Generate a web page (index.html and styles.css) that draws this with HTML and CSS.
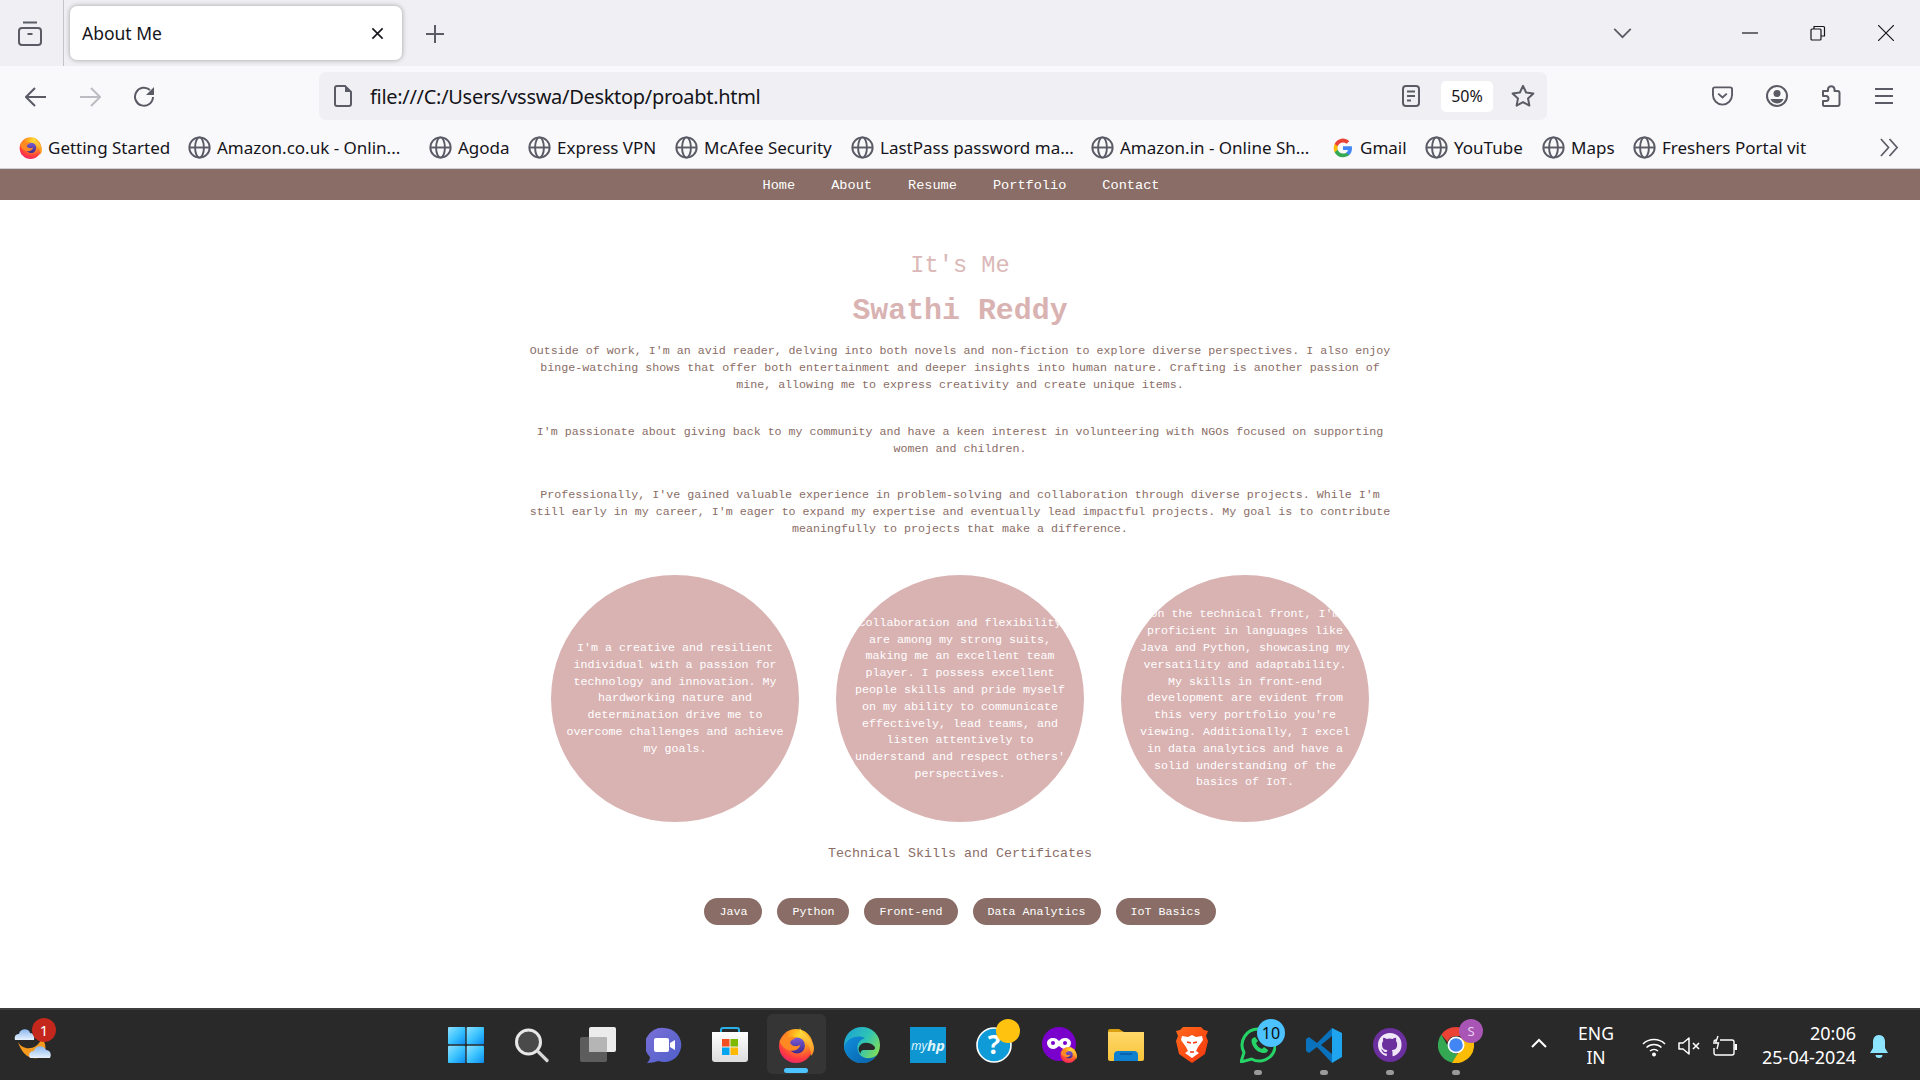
FILE: index.html
```html
<!DOCTYPE html>
<html lang="en">
<head>
<meta charset="utf-8">
<title>About Me</title>
<link rel="stylesheet" href="styles.css">
</head>
<body>
<svg class="defs" width="0" height="0" aria-hidden="true">
  <defs>
    <radialGradient id="ffBody" cx="0.62" cy="0.2" r="0.95">
      <stop offset="0" stop-color="#ffe226"/><stop offset="0.35" stop-color="#ff9a1f"/><stop offset="0.7" stop-color="#ff3d3d"/><stop offset="1" stop-color="#e31587"/>
    </radialGradient>
    <linearGradient id="ffFlame" x1="0" y1="0" x2="0" y2="1">
      <stop offset="0" stop-color="#ffe84d"/><stop offset="1" stop-color="#ff8a1f"/>
    </linearGradient>
    <linearGradient id="ffCore" x1="0" y1="0" x2="0" y2="1">
      <stop offset="0" stop-color="#7b5bd6"/><stop offset="1" stop-color="#3d2a8c"/>
    </linearGradient>
    <linearGradient id="winG" x1="0" y1="0" x2="1" y2="1">
      <stop offset="0" stop-color="#8fe0ff"/><stop offset="0.5" stop-color="#3cc4ff"/><stop offset="1" stop-color="#0a8cf0"/>
    </linearGradient>
    <linearGradient id="meetG" x1="0" y1="0" x2="1" y2="1">
      <stop offset="0" stop-color="#7b6fd8"/><stop offset="1" stop-color="#4f5fc9"/>
    </linearGradient>
    <linearGradient id="edgeG" x1="0" y1="0" x2="1" y2="0.6">
      <stop offset="0" stop-color="#1a9fd8"/><stop offset="0.6" stop-color="#2fc4b4"/><stop offset="1" stop-color="#7ddc5c"/>
    </linearGradient>
    <linearGradient id="edgeB" x1="0" y1="0" x2="1" y2="1">
      <stop offset="0" stop-color="#0f8fdc"/><stop offset="1" stop-color="#0a5fa8"/>
    </linearGradient>
    <linearGradient id="folderG" x1="0" y1="0" x2="0" y2="1">
      <stop offset="0" stop-color="#ffd869"/><stop offset="1" stop-color="#f8c33a"/>
    </linearGradient>
    <linearGradient id="braveG" x1="0" y1="0" x2="1" y2="1">
      <stop offset="0" stop-color="#ff6a1a"/><stop offset="1" stop-color="#f5360f"/>
    </linearGradient>
    <linearGradient id="bagG" x1="0" y1="0" x2="0" y2="1">
      <stop offset="0" stop-color="#ffffff"/><stop offset="1" stop-color="#dcdcdc"/>
    </linearGradient>
    <linearGradient id="cloudG" x1="0" y1="0" x2="0" y2="1">
      <stop offset="0" stop-color="#8cb8ee"/><stop offset="1" stop-color="#e8f2ff"/>
    </linearGradient>
    <symbol id="globe" viewBox="0 0 24 24">
      <g fill="none" stroke="#5b5b66" stroke-width="2">
        <circle cx="12" cy="12" r="10.6"/>
        <ellipse cx="12" cy="12" rx="4.6" ry="10.6"/>
        <path d="M1.5 12h21"/>
      </g>
    </symbol>
    <symbol id="firefox" viewBox="0 0 36 36">
      <circle cx="18" cy="19" r="17" fill="url(#ffBody)"/>
      <path d="M22 0c0 4 4 6 7 9 4 3 7 8 7 12 0 3-1 6-3 8 0-6-2-11-7-15-3-3-5-8-4-14z" fill="url(#ffFlame)"/>
      <circle cx="19" cy="18.500" r="8" fill="url(#ffCore)"/>
      <path d="M1.500 14c2-2 3-5 6-7 0 2 1 3.500 3 3.500 2-1 4-1 7 0-1 2-4 2-5 4-1 1 0 3 2 4 3 1 6 1 8-1-1 4-5 7-10 6-5-1-9-4-11-9.500z" fill="#ff8a24"/>
    </symbol>
    <symbol id="chev" viewBox="0 0 24 24">
      <path d="M5 15l7-7 7 7" fill="none" stroke="#fff" stroke-width="2"/>
    </symbol>
  </defs>
</svg>

<header class="tabbar">
  <svg class="ico-tabs" viewBox="0 0 24 25"><g fill="none" stroke="#5b5b66" stroke-width="2"><rect x="1" y="7" width="22" height="17" rx="3"/><path d="M5 1.500h14M9.500 13h5"/></g></svg>
  <span class="tab-sep"></span>
  <div class="tab">
    <span class="tab-title">About Me</span>
    <svg class="ico-x" viewBox="0 0 14 14"><path d="M1.500 1.500l11 11M12.500 1.500l-11 11" fill="none" stroke="#15141a" stroke-width="1.700"/></svg>
  </div>
  <svg class="ico-plus" viewBox="0 0 18 18"><path d="M9 0v18M0 9h18" fill="none" stroke="#5b5b66" stroke-width="2"/></svg>
  <span class="grow"></span>
  <svg class="ico-down" viewBox="0 0 20 12"><path d="M1 1l9 9 9-9" fill="none" stroke="#5b5b66" stroke-width="2"/></svg>
  <div class="winctl">
    <svg class="w-ico" viewBox="0 0 16 16"><path d="M0 8h16" stroke="#15141a" stroke-width="1.200"/></svg>
    <svg class="w-ico" viewBox="0 0 16 16"><g fill="none" stroke="#15141a" stroke-width="1.200"><rect x="1" y="4" width="10" height="11" rx="1"/><path d="M4 4V1.500h9.500a1 1 0 0 1 1 1V11H11"/></g></svg>
    <svg class="w-ico" viewBox="0 0 16 16"><path d="M0 0l16 16M16 0L0 16" fill="none" stroke="#15141a" stroke-width="1.200"/></svg>
  </div>
</header>

<div class="toolbar">
  <svg class="tb-ico" viewBox="0 0 22 22"><path d="M21 11H2M10 2l-9 9 9 9" fill="none" stroke="#5b5b66" stroke-width="2"/></svg>
  <svg class="tb-ico" viewBox="0 0 22 22"><path d="M1 11h19M12 2l9 9-9 9" fill="none" stroke="#bcbcc2" stroke-width="2"/></svg>
  <svg class="tb-ico" viewBox="0 0 22 22"><path d="M20 11a9 9 0 1 1-3-7" fill="none" stroke="#5b5b66" stroke-width="2"/><path d="M21 1v8h-8z" fill="#5b5b66"/></svg>
  <div class="urlbar">
    <svg class="ico-page" viewBox="0 0 18 22"><path d="M3 1h8l6 6v12a2 2 0 0 1-2 2H3a2 2 0 0 1-2-2V3a2 2 0 0 1 2-2z" fill="none" stroke="#5b5b66" stroke-width="2"/><path d="M11 1v6h6z" fill="#5b5b66"/></svg>
    <span class="url">file:///C:/Users/vsswa/Desktop/proabt.html</span>
    <span class="grow"></span>
    <svg class="ico-reader" viewBox="0 0 18 22"><rect x="1" y="1" width="16" height="20" rx="3" fill="none" stroke="#5b5b66" stroke-width="2"/><path d="M5 6.500h8M5 11h8M5 15.500h4" stroke="#5b5b66" stroke-width="2"/></svg>
    <span class="zoom-pill">50%</span>
    <svg class="ico-star" viewBox="0 0 24 24"><path d="M12 1.800l3.100 6.700 7.300.9-5.400 5 1.400 7.200L12 18.100l-6.400 3.500 1.400-7.200-5.400-5 7.300-.9z" fill="none" stroke="#5b5b66" stroke-width="2" stroke-linejoin="round"/></svg>
  </div>
  <div class="tools">
    <svg class="t-pocket" viewBox="0 0 22 20"><path d="M3 1h16a2 2 0 0 1 2 2v6a10 10 0 0 1-20 0V3a2 2 0 0 1 2-2z" fill="none" stroke="#5b5b66" stroke-width="2"/><path d="M6.500 7.500l4.500 4 4.500-4" fill="none" stroke="#5b5b66" stroke-width="2"/></svg>
    <svg class="t-acct" viewBox="0 0 22 22"><circle cx="11" cy="11" r="10" fill="none" stroke="#5b5b66" stroke-width="2"/><circle cx="11" cy="8.500" r="3.500" fill="#5b5b66"/><path d="M4.500 14h13a7 7 0 0 1-13 0z" fill="#5b5b66"/></svg>
    <svg class="t-ext" viewBox="0 0 20 23"><path d="M2 7h5V5a3.300 3.300 0 0 1 6.500 0v2h3a2 2 0 0 1 2 2v11a2 2 0 0 1-2 2H3a1 1 0 0 1-1-1v-4h3a2.500 2.500 0 0 0 0-5H2z" fill="none" stroke="#5b5b66" stroke-width="2" stroke-linejoin="round"/></svg>
    <svg class="t-menu" viewBox="0 0 18 18"><path d="M0 2h18M0 9h18M0 16h18" stroke="#5b5b66" stroke-width="2"/></svg>
  </div>
</div>

<nav class="bookmarks">
  <a class="bm bm1"><svg class="bm-ico"><use href="#firefox"/></svg>Getting Started</a>
  <a class="bm bm2"><svg class="bm-ico"><use href="#globe"/></svg>Amazon.co.uk - Onlin...</a>
  <a class="bm bm3"><svg class="bm-ico"><use href="#globe"/></svg>Agoda</a>
  <a class="bm bm4"><svg class="bm-ico"><use href="#globe"/></svg>Express VPN</a>
  <a class="bm bm5"><svg class="bm-ico"><use href="#globe"/></svg>McAfee Security</a>
  <a class="bm bm6"><svg class="bm-ico"><use href="#globe"/></svg>LastPass password ma...</a>
  <a class="bm bm7"><svg class="bm-ico"><use href="#globe"/></svg>Amazon.in - Online Sh...</a>
  <a class="bm bm8"><svg class="bm-ico bm-g" viewBox="0 0 24 24">
    <path d="M21.800 12.200c0-.7-.1-1.400-.2-2H12v3.900h5.500a4.700 4.700 0 0 1-2 3.100v2.500h3.300c1.900-1.800 3-4.400 3-7.500z" fill="#4285f4"/>
    <path d="M12 22c2.700 0 5-.9 6.800-2.400l-3.300-2.500c-.9.600-2.100 1-3.500 1-2.700 0-4.900-1.800-5.700-4.200H2.900v2.600A10 10 0 0 0 12 22z" fill="#34a853"/>
    <path d="M6.300 13.900a6 6 0 0 1 0-3.800V7.500H2.900a10 10 0 0 0 0 9z" fill="#fbbc05"/>
    <path d="M12 5.900c1.500 0 2.800.5 3.900 1.500l2.900-2.900A10 10 0 0 0 2.900 7.500l3.400 2.600C7.100 7.700 9.300 5.900 12 5.900z" fill="#ea4335"/>
  </svg>Gmail</a>
  <a class="bm bm9"><svg class="bm-ico"><use href="#globe"/></svg>YouTube</a>
  <a class="bm bm10"><svg class="bm-ico"><use href="#globe"/></svg>Maps</a>
  <a class="bm bm11"><svg class="bm-ico"><use href="#globe"/></svg>Freshers Portal vit</a>
  <svg class="ico-more" viewBox="0 0 20 20"><path d="M1 1l8 9-8 9M10 1l8 9-8 9" fill="none" stroke="#5b5b66" stroke-width="1.800"/></svg>
</nav>

<nav class="sitenav">
  <a>Home</a><a>About</a><a>Resume</a><a>Portfolio</a><a>Contact</a>
</nav>

<main class="page">
  <h2 class="eyebrow">It's Me</h2>
  <h1 class="name">Swathi Reddy</h1>
  <p class="para">Outside of work, I'm an avid reader, delving into both novels and non-fiction to explore diverse perspectives. I also enjoy binge-watching shows that offer both entertainment and deeper insights into human nature. Crafting is another passion of mine, allowing me to express creativity and create unique items.</p>
  <p class="para para-mid">I'm passionate about giving back to my community and have a keen interest in volunteering with NGOs focused on supporting women and children.</p>
  <p class="para">Professionally, I've gained valuable experience in problem-solving and collaboration through diverse projects. While I'm still early in my career, I'm eager to expand my expertise and eventually lead impactful projects. My goal is to contribute meaningfully to projects that make a difference.</p>
  <section class="circles">
    <div class="circle"><p>I'm a creative and resilient individual with a passion for technology and innovation. My hardworking nature and determination drive me to overcome challenges and achieve my goals.</p></div>
    <div class="circle"><p>Collaboration and flexibility are among my strong suits, making me an excellent team player. I possess excellent people skills and pride myself on my ability to communicate effectively, lead teams, and listen attentively to understand and respect others' perspectives.</p></div>
    <div class="circle"><p>On the technical front, I'm proficient in languages like Java and Python, showcasing my versatility and adaptability. My skills in front-end development are evident from this very portfolio you're viewing. Additionally, I excel in data analytics and have a solid understanding of the basics of IoT.</p></div>
  </section>
  <h3 class="skills-title">Technical Skills and Certificates</h3>
  <div class="pills">
    <span class="pill">Java</span><span class="pill">Python</span><span class="pill">Front-end</span><span class="pill">Data Analytics</span><span class="pill">IoT Basics</span>
  </div>
</main>

<footer class="taskbar">
  <div class="weather">
    <svg class="wx" viewBox="0 0 40 34">
      <path d="M4 16C8 24 22 26 28 12c6 8 4 18-4 20C14 34 7 26 4 16z" fill="#f59a1c"/>
      <path d="M1 14c-1-4 1-6 4-6 1-6 10-6 11-1 3 0 5 3 4 7z" fill="url(#cloudG)"/>
      <path d="M16 32c-2-4 0-7 4-7 1-6 10-6 12-1 4 0 6 4 4 8z" fill="url(#cloudG)"/>
    </svg>
    <span class="wx-badge">1</span>
  </div>
  <div class="apps">
    <div class="app"><svg class="a36" viewBox="0 0 36 36"><g fill="url(#winG)"><rect width="17.300" height="17.300" rx="1"/><rect x="18.700" width="17.300" height="17.300" rx="1"/><rect y="18.700" width="17.300" height="17.300" rx="1"/><rect x="18.700" y="18.700" width="17.300" height="17.300" rx="1"/></g></svg></div>
    <div class="app"><svg class="a36" viewBox="0 0 36 36"><circle cx="14.500" cy="15" r="12" fill="#4a4a4a" stroke="#e8e8e8" stroke-width="3"/><path d="M24 24.500l9 9" stroke="#d8d8d8" stroke-width="3.200" stroke-linecap="round"/></svg></div>
    <div class="app"><svg class="a36" viewBox="0 0 36 36"><rect x="0" y="10" width="27" height="25" rx="2" fill="#5d5d5d"/><rect x="9" y="0" width="27" height="25" rx="2" fill="#ececec"/><rect x="9" y="10" width="18" height="15" rx="1" fill="#b5b5b5"/></svg></div>
    <div class="app"><svg class="a36" viewBox="0 0 36 36"><path d="M18 1a17 17 0 1 1-5.500 33C9 35 5 36 1 36c2-2 3-4 3-6A17 17 0 0 1 18 1z" fill="url(#meetG)"/><rect x="8" y="11" width="15" height="14" rx="2" fill="#fff"/><path d="M24 16l5-3v10l-5-3z" fill="#fff"/></svg></div>
    <div class="app"><svg class="a36" viewBox="0 0 36 36"><path d="M9 7V3a2 2 0 0 1 2-2h14a2 2 0 0 1 2 2v4" fill="none" stroke="#27b1e8" stroke-width="2"/><path d="M0 5h36v27a3 3 0 0 1-3 3H3a3 3 0 0 1-3-3z" fill="url(#bagG)"/><rect x="10" y="12" width="7.500" height="7.500" fill="#f25022"/><rect x="18.500" y="12" width="7.500" height="7.500" fill="#7fba00"/><rect x="10" y="20.500" width="7.500" height="7.500" fill="#00a4ef"/><rect x="18.500" y="20.500" width="7.500" height="7.500" fill="#ffb900"/></svg></div>
    <div class="app app-active"><svg class="a36"><use href="#firefox"/></svg><span class="run-line"></span></div>
    <div class="app"><svg class="a36" viewBox="0 0 36 36"><circle cx="18" cy="18" r="18" fill="url(#edgeG)"/><path d="M0 20C3 11 13 7 21 11c-6 2-9 7-7 13 2 7 11 10 19 4A18 18 0 0 1 0 20z" fill="url(#edgeB)"/><path d="M15 20c2-5 10-6 15-1 2 2 1 4-2 4h-8c-2 0-4 1-3 4-2-2-3-4-2-7z" fill="#292929"/></svg></div>
    <div class="app"><span class="myhp">my<b>hp</b></span></div>
    <div class="app app-badged"><svg class="a36" viewBox="0 0 36 36"><circle cx="18" cy="18" r="17" fill="#0f9bd7" stroke="#fff" stroke-width="1.600"/></svg><span class="help-q">?</span><span class="dot-y"></span></div>
    <div class="app app-badged"><svg class="a36" viewBox="0 0 36 36"><circle cx="17" cy="17" r="17" fill="#7a00cc"/><path d="M5 16c0-3 3-5 6-5 3 0 4 1 6 3 2-2 3-3 6-3 3 0 6 2 6 5s-3 6-6 6c-3 0-4-2-6-3-2 1-3 3-6 3-3 0-6-3-6-6z" fill="#fff"/><circle cx="11" cy="16" r="2" fill="#7a00cc"/><circle cx="23" cy="16" r="2" fill="#7a00cc"/></svg><svg class="mini-ff"><use href="#firefox"/></svg></div>
    <div class="app"><svg class="a36" viewBox="0 0 36 32"><path d="M0 2a2 2 0 0 1 2-2h9l5 3h18a2 2 0 0 1 2 2v4H0z" fill="#d9a011"/><path d="M0 3h36v27a2 2 0 0 1-2 2H2a2 2 0 0 1-2-2z" fill="url(#folderG)"/><path d="M6 32v-6a4 4 0 0 1 4-4h16a4 4 0 0 1 4 4v6z" fill="#0f7fd0"/><path d="M12 25h12" stroke="#0a5a9e" stroke-width="1.500"/></svg></div>
    <div class="app"><svg class="a32" viewBox="0 0 32 36"><path d="M7 0h18l3 3 4 1-2 5 2 5-3 13-10 7-3 2-3-2-10-7L0 14l2-5-2-5 4-1z" fill="url(#braveG)"/><path d="M6 9l6 1 4-2 4 2 6-1 1 4-5 7-2 4 3 2-7 5-7-5 3-2-2-4-5-7z" fill="#fff"/><path d="M11 15l4 1M21 15l-4 1M14 25h4" stroke="#f5360f" stroke-width="1.600"/></svg></div>
    <div class="app app-badged"><svg class="a36" viewBox="0 0 36 36"><path d="M19 2a16 16 0 1 1-7.500 30L1 35l3-9.500A16 16 0 0 1 19 2z" fill="none" stroke="#25d366" stroke-width="3"/><path d="M13 11c-2 1-2 4 0 8 3 5 7 7 11 7 3 0 4-2 4-3l-4-3-2 2c-3-1-5-3-6-6l2-2-3-4z" fill="#25d366"/></svg><span class="count-badge">10</span><span class="run-dot"></span></div>
    <div class="app"><svg class="a36" viewBox="0 0 36 36"><path d="M26 1l10 5v24l-10 6z" fill="#1fa5ef"/><path d="M26 1L11 16 3 10 0 12v12l3 2 8-6 15 16v-9L15 18 26 9z" fill="#0a72bc"/></svg><span class="run-dot"></span></div>
    <div class="app"><svg class="a36" viewBox="0 0 36 36"><circle cx="18" cy="18" r="17" fill="#6b2f9e"/><path d="M18 6c-7 0-12 5-12 12 0 5 3 9 8 11 .6.100.8-.3.800-.6v-2c-3 .6-4-1.400-4-1.400-.6-1.300-1.300-1.700-1.300-1.700-1-.7.100-.7.100-.7 1.200.1 1.800 1.200 1.800 1.200 1 1.800 2.700 1.300 3.400 1 .1-.8.400-1.300.7-1.600-2.700-.3-5.500-1.300-5.500-6 0-1.300.5-2.400 1.200-3.200-.1-.3-.5-1.500.1-3.200 0 0 1-.3 3.300 1.200a11 11 0 0 1 6 0c2.300-1.500 3.300-1.200 3.300-1.200.6 1.700.2 2.900.1 3.200.8.800 1.200 1.900 1.200 3.200 0 4.700-2.800 5.700-5.500 6 .4.400.8 1.100.8 2.200v3.200c0 .3.200.7.800.6 5-1.700 8.200-6 8.200-11C30 11 25 6 18 6z" fill="#efe6f7"/></svg><span class="run-dot"></span></div>
    <div class="app app-badged"><svg class="a36 chrome" viewBox="0 0 36 36"><path d="M18 0a18 18 0 0 1 15.600 9H18a9 9 0 0 0-8.500 6L3.300 7.500A18 18 0 0 1 18 0z" fill="#ea4335"/><path d="M3.300 7.500L10.500 20a9 9 0 0 0 9.500 7l-6 8.700A18 18 0 0 1 3.300 7.500z" fill="#34a853"/><path d="M33.600 9A18 18 0 0 1 14 35.700L22 23a9 9 0 0 0-1-12z" fill="#fbbc05"/><circle cx="18" cy="18" r="8.500" fill="#fff"/><circle cx="18" cy="18" r="6.800" fill="#4285f4"/></svg><span class="s-badge">S</span><span class="run-dot"></span></div>
  </div>
  <div class="tray">
    <svg class="tr-chev"><use href="#chev"/></svg>
    <div class="lang"><span>ENG</span><span>IN</span></div>
    <svg class="tr-wifi" viewBox="0 0 24 20"><g fill="none" stroke="#fff" stroke-width="1.500"><path d="M1 7a16 16 0 0 1 22 0"/><path d="M4.500 10.500a11 11 0 0 1 15 0"/><path d="M8 14a6 6 0 0 1 8 0"/></g><circle cx="12" cy="17.500" r="2" fill="#fff"/></svg>
    <svg class="tr-vol" viewBox="0 0 24 20"><path d="M1 7h4l6-5v16l-6-5H1z" fill="none" stroke="#fff" stroke-width="1.500" stroke-linejoin="round"/><path d="M15 7l6 6M21 7l-6 6" stroke="#fff" stroke-width="1.600"/></svg>
    <svg class="tr-batt" viewBox="0 0 24 22"><path d="M7 5h12a2 2 0 0 1 2 2v11a2 2 0 0 1-2 2H3a2 2 0 0 1-2-2v-5M1 9V7a2 2 0 0 1 2-2" fill="none" stroke="#fff" stroke-width="1.400"/><path d="M5 1L2.500 8h3L4 14" fill="none" stroke="#fff" stroke-width="1.400"/><rect x="21.500" y="9" width="2.500" height="6" fill="#fff"/></svg>
    <div class="clock"><span>20:06</span><span>25-04-2024</span></div>
    <svg class="tr-bell" viewBox="0 0 20 26"><path d="M10 1c4 0 6 3 6 7v6l3 5H1l3-5V8c0-4 2-7 6-7z" fill="#8ce4ff"/><path d="M6.500 21h7a3.500 3 0 0 1-7 0z" fill="#8ce4ff"/></svg>
  </div>
</footer>
</body>
</html>
```

FILE: styles.css
```css
* { box-sizing: border-box; }
html, body { margin: 0; height: 100%; }
body {
  width: 1920px;
  height: 1080px;
  overflow: hidden;
  display: flex;
  flex-direction: column;
  font-family: "Noto Sans", "Open Sans", sans-serif;
  color: #15141a;
  background: #fff;
}
.defs { position: absolute; }
.grow { flex: 1; }

/* tab strip */
.tabbar {
  height: 66px;
  background: #f0f0f4;
  display: flex;
  align-items: center;
  flex: none;
}
.ico-tabs { width: 24px; height: 25px; margin-left: 18px; margin-top: 1px; }
.tab-sep { width: 1px; height: 66px; background: #c4c4c8; margin-left: 21px; }
.tab {
  width: 332px;
  height: 54px;
  margin-left: 6px;
  background: #fff;
  border-radius: 7px;
  box-shadow: 0 0 5px rgba(0, 0, 0, .35);
  display: flex;
  align-items: center;
  padding: 0 18px 0 12px;
}
.tab-title { flex: 1; font-size: 17.5px; }
.ico-x { width: 13px; height: 13px; }
.ico-plus { width: 18px; height: 18px; margin-left: 24px; margin-top: 1px; }
.ico-down { width: 19px; height: 11px; }
.winctl { display: flex; align-items: center; gap: 52px; margin-left: 110px; margin-right: 26px; }
.w-ico { width: 16px; height: 16px; }

/* toolbar */
.toolbar {
  height: 61px;
  background: #f9f9fb;
  display: flex;
  align-items: center;
  padding-left: 25px;
  flex: none;
}
.tb-ico { width: 22px; height: 22px; margin-right: 32px; }
.tb-ico:nth-of-type(3) { margin-right: 0; }
.urlbar {
  width: 1228px;
  height: 48px;
  margin-left: 164px;
  margin-top: -1px;
  background: #f0f0f4;
  border-radius: 7px;
  display: flex;
  align-items: center;
  padding: 0 12px 0 15px;
}
.ico-page { width: 18px; height: 22px; }
.url { margin-left: 18px; font-size: 20px; letter-spacing: -.3px; }
.ico-reader { width: 18px; height: 22px; }
.zoom-pill {
  width: 52px;
  height: 31px;
  margin-left: 21px;
  background: #fff;
  border-radius: 5px;
  font-size: 16px;
  display: flex;
  align-items: center;
  justify-content: center;
}
.ico-star { width: 24px; height: 24px; margin-left: 18px; }
.tools { display: flex; align-items: center; margin-left: 165px; margin-top: -2px; }
.t-pocket { width: 21px; height: 20px; }
.t-acct { width: 22px; height: 22px; margin-left: 33px; }
.t-ext { width: 20px; height: 23px; margin-left: 33px; }
.t-menu { width: 18px; height: 18px; margin-left: 34px; }

/* bookmarks */
.bookmarks {
  height: 42px;
  background: #f9f9fb;
  border-bottom: 1px solid #cfcfd8;
  display: flex;
  align-items: center;
  padding-left: 19px;
  font-size: 17px;
  flex: none;
}
.bm { display: flex; align-items: center; gap: 6px; white-space: nowrap; flex: none; }
.bm-ico { width: 23px; height: 23px; flex: none; }
.bm-g { width: 22px; height: 22px; }
.bm1 { width: 169px; } .bm2 { width: 241px; } .bm3 { width: 99px; } .bm4 { width: 147px; }
.bm5 { width: 176px; } .bm6 { width: 240px; } .bm7 { width: 241px; } .bm8 { width: 93px; }
.bm9 { width: 117px; } .bm10 { width: 91px; } .bm11 { width: 247px; }
.ico-more { width: 19px; height: 19px; }

/* site nav */
.sitenav {
  height: 31px;
  background: #8a6d66;
  display: flex;
  justify-content: center;
  align-items: center;
  gap: 36px;
  padding: 2px 0 0 2px;
  flex: none;
  font-family: "Liberation Mono", monospace;
  font-size: 13.6px;
  color: #fff;
}

/* page */
.page {
  flex: 1;
  min-height: 0;
  display: flex;
  flex-direction: column;
  align-items: center;
  font-family: "Liberation Mono", monospace;
  color: #8a6d66;
  text-align: center;
  padding-top: 52px;
}
.eyebrow { margin: 0; font-size: 23.7px; line-height: 28px; font-weight: 400; color: #dbb8b8; }
.name { margin: 13px 0 14px; font-size: 29.9px; line-height: 36px; font-weight: 700; color: #d9b2b2; }
.para { width: 870px; margin: 0 0 30px; font-size: 11.67px; line-height: 16.8px; }
.para-mid { margin-top: 1px; margin-bottom: 29px; }
.circles { display: flex; gap: 37px; margin-top: 8px; }
.circle {
  width: 248px;
  height: 247px;
  border-radius: 50%;
  background: #d9b2b2;
  overflow: hidden;
  display: flex;
  align-items: center;
  padding: 14px;
  color: #fff;
  font-size: 11.67px;
  line-height: 16.8px;
}
.circle p { margin: 0; }
.skills-title { margin: 22px 0 34px; font-size: 13.33px; line-height: 20px; font-weight: 400; }
.pills { display: flex; gap: 15px; }
.pill {
  height: 27px;
  padding: 0 15px;
  border-radius: 14px;
  background: #8a6d66;
  color: #fff;
  font-size: 11.68px;
  display: flex;
  align-items: center;
}

/* taskbar */
.taskbar {
  height: 72px;
  flex: none;
  background: #292929;
  border-top: 2px solid #3d3d3d;
  display: flex;
  align-items: center;
  color: #fff;
}
.weather { width: 433px; height: 70px; position: relative; flex: none; }
.wx { width: 40px; height: 34px; position: absolute; left: 14px; top: 16px; }
.wx-badge {
  position: absolute;
  left: 32px;
  top: 8px;
  width: 24px;
  height: 24px;
  border-radius: 50%;
  background: #c4281c;
  font-size: 15px;
  line-height: 24px;
  text-align: center;
}
.apps { display: flex; flex: none; }
.app {
  width: 66px;
  height: 70px;
  display: flex;
  align-items: center;
  justify-content: center;
  position: relative;
}
.a36 { width: 36px; height: 36px; }
.a32 { width: 32px; height: 36px; }
.app-active::before {
  content: "";
  position: absolute;
  left: 4px;
  top: 4px;
  width: 59px;
  height: 60px;
  border-radius: 6px;
  background: #353535;
}
.app-active .a36 { position: relative; }
.run-line {
  position: absolute;
  left: 21px;
  top: 58px;
  width: 24px;
  height: 5px;
  border-radius: 3px;
  background: #4cc2ff;
}
.run-dot {
  position: absolute;
  left: 29px;
  top: 60px;
  width: 8px;
  height: 5px;
  border-radius: 3px;
  background: #9a9a9a;
}
.myhp {
  width: 36px;
  height: 36px;
  background: #0d96d2;
  font-size: 12px;
  display: flex;
  align-items: center;
  justify-content: center;
  font-style: italic;
  color: #dff3fb;
}
.myhp b { font-size: 15px; font-weight: 700; }
.help-q {
  position: absolute;
  left: 0;
  right: 0;
  top: 16px;
  text-align: center;
  font-size: 26px;
  font-weight: 700;
  line-height: 36px;
  color: #fff;
}
.dot-y {
  position: absolute;
  left: 35px;
  top: 9px;
  width: 24px;
  height: 24px;
  border-radius: 50%;
  background: #ffc20e;
}
.mini-ff { position: absolute; left: 33px; top: 36px; width: 17px; height: 17px; }
.count-badge {
  position: absolute;
  left: 32px;
  top: 9px;
  width: 28px;
  height: 28px;
  border-radius: 50%;
  background: #4cc2ff;
  color: #0d0d0d;
  font-size: 16px;
  line-height: 28px;
  text-align: center;
}
.s-badge {
  position: absolute;
  left: 36px;
  top: 9px;
  width: 24px;
  height: 24px;
  border-radius: 50%;
  background: #a855b5;
  color: #e6cfea;
  font-size: 13px;
  line-height: 24px;
  text-align: center;
}
.tray { display: flex; align-items: center; flex: 1; height: 70px; position: relative; font-size: 17px; }
.tr-chev { width: 24px; height: 24px; margin-left: 38px; margin-top: -2px; }
.lang { width: 60px; margin-left: 15px; display: flex; flex-direction: column; align-items: center; line-height: 24px; font-size: 17.5px; }
.tr-wifi { width: 24px; height: 20px; margin-left: 16px; margin-top: 4px; }
.tr-vol { width: 24px; height: 20px; margin-left: 12px; margin-top: 2px; }
.tr-batt { width: 24px; height: 22px; margin-left: 11px; margin-top: 2px; }
.clock { width: 120px; margin-left: -1px; display: flex; flex-direction: column; align-items: flex-end; line-height: 24px; font-size: 18px; }
.tr-bell { width: 20px; height: 26px; margin-left: 13px; margin-top: 4px; }
```
